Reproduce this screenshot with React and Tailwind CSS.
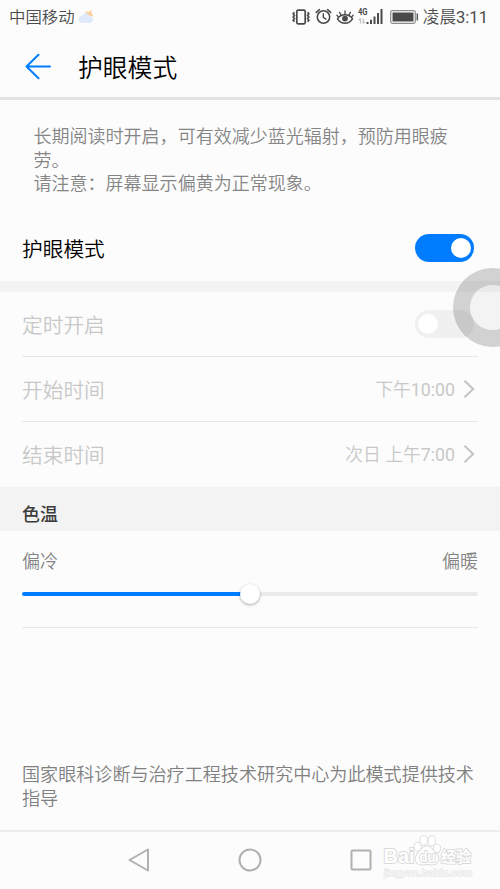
import React, { useState } from 'react';

function VibrateIcon() {
  return (
    <svg width="20" height="16" viewBox="0 0 20 16" fill="none" stroke="#4a4a4a">
      <rect x="5.8" y="1.2" width="8.4" height="13.6" rx="1.2" strokeWidth="1.7" />
      <path d="M3.400 3.200L2.200 4.800l1.200 1.600L2.200 8l1.200 1.600-1.200 1.600 1.200 1.600M16.600 3.200l1.200 1.600-1.200 1.600L17.800 8l-1.200 1.600 1.200 1.600-1.200 1.600" strokeWidth="1.700" />
    </svg>
  );
}

function AlarmIcon() {
  return (
    <svg width="17" height="17" viewBox="0 0 17 17" fill="none" stroke="#4a4a4a" strokeLinecap="round">
      <circle cx="8.5" cy="9" r="6.2" strokeWidth="1.6" />
      <path d="M8.3 5.8V9.4l2.6 1.7" strokeWidth="1.4" />
      <path d="M1.3 4.4L4.4 1.7M15.7 4.4l-3.1-2.7" strokeWidth="1.6" />
    </svg>
  );
}

function EyeIcon() {
  return (
    <svg width="18" height="16" viewBox="0 0 18 16" fill="none" stroke="#4a4a4a" strokeLinecap="round">
      <path d="M1.500 9.800C3.200 7.200 5.700 5.800 9 5.800s5.800 1.400 7.500 4C14.800 12.600 12.300 14.200 9 14.200S3.200 12.600 1.500 9.800z" strokeWidth="1.500" />
      <circle cx="9" cy="9.600" r="2.900" fill="#4a4a4a" stroke="none" />
      <path d="M9 5V2M5 5.800L3.600 3.400M13 5.800l1.400-2.400M2.300 8L.9 6.200M15.700 8l1.400-1.800" strokeWidth="1.300" />
    </svg>
  );
}

function SignalIcon() {
  return (
    <div className="relative h-[17px] w-[26px]">
      <span className="absolute -top-px left-0 origin-left scale-x-[0.8] text-[9.500px] font-bold leading-[10px] text-[#4a4a4a]">4G</span>
      <svg className="absolute inset-0" width="26" height="17" viewBox="0 0 26 17">
        <path d="M2.500 15.500v-5M.9 12.300l1.600-1.800M5.200 10.500v5M6.800 13.700l-1.600 1.800" stroke="#c0c0c0" strokeWidth="1.200" fill="none" />
        <path d="M8.500 14h2v2h-2zM12 11.800h2V16h-2zM15.500 8.500h2V16h-2zM19 5h2v11h-2zM22.500 1h2v15h-2z" fill="#4a4a4a" />
      </svg>
    </div>
  );
}

function BatteryIcon() {
  return (
    <svg width="29" height="14" viewBox="0 0 29 14">
      <rect x=".7" y=".7" width="24.600" height="12.600" rx="1.800" fill="none" stroke="#8a8a8a" strokeWidth="1.200" />
      <rect x="2.500" y="2.500" width="21" height="9" rx=".5" fill="#4a4a4a" />
      <path d="M27.300 3.500v7" stroke="#5a5a5a" strokeWidth="1.500" />
    </svg>
  );
}

function WeatherIcon() {
  return (
    <svg width="17" height="15" viewBox="0 0 17 15">
      <path d="M7.500 2.200l3 .9L13.500.8l-.2 2.900 2.200 3.800-3.500-.6-4-2.500z" fill="#fbcd98" />
      <path d="M4 14a3.700 3.700 0 01-.4-7.300A4.300 4.300 0 0111.500 6.900 3.600 3.600 0 0111.800 14z" fill="#dfe9fa" />
    </svg>
  );
}

function StatusBar() {
  return (
    <div className="flex h-[34px] items-center justify-between pl-[9px] pr-[12px] text-[16.4px] text-[#4c4c4c]">
      <div className="flex items-center">
        <span className="pt-[3px]">中国移动</span>
        <span className="ml-[3px]"><WeatherIcon /></span>
      </div>
      <div className="flex items-center">
        <VibrateIcon />
        <span className="ml-[4px]"><AlarmIcon /></span>
        <span className="ml-[4px]"><EyeIcon /></span>
        <span className="ml-[4px]"><SignalIcon /></span>
        <span className="ml-[6px]"><BatteryIcon /></span>
        <span className="ml-[4px] pt-[3px] text-[16.6px]">凌晨<span className="font-normal">3:11</span></span>
      </div>
    </div>
  );
}

function Header() {
  return (
    <div className="flex h-[66px] items-center border-b-[3px] border-[#e2e2e2] pl-[25px] pt-[2px]">
      <svg width="27" height="27" viewBox="0 0 27 27" fill="none" stroke="#007dff" strokeWidth="2" strokeLinecap="round" strokeLinejoin="round">
        <path d="M25 13.500H1.500M13.500 1.800L1.500 13.500l12 11.700" />
      </svg>
      <h1 className="ml-[26px] pt-[6px] text-[24.8px] leading-none text-black">护眼模式</h1>
    </div>
  );
}

function Toggle({ on, onChange, disabled }) {
  return (
    <button
      onClick={onChange}
      disabled={disabled}
      className={`flex h-7 w-[59px] items-center rounded-full px-[3px] ${on ? 'justify-end bg-[#007dff]' : 'justify-start bg-[#f0f0f0]'}`}
    >
      <span className="size-5 rounded-full bg-white" />
    </button>
  );
}

function Row({ label, value, time, last, children }) {
  return (
    <div className={`mx-[22px] flex h-[65px] items-center justify-between border-b ${last ? 'border-transparent' : 'border-[#e6e6e6]'}`}>
      <span className="pt-[5px] text-[20.7px] text-[#c8c8c8]">{label}</span>
      {time && (
        <span className="flex items-center text-[17.8px] text-[#c8c8c8]">
          <span className="whitespace-pre pt-[3px]">{value}<span className="font-normal">{time}</span></span>
          <svg className="ml-[8px] mr-[3px]" width="12" height="20" viewBox="0 0 12 20" fill="none" stroke="#c4c4c4" strokeWidth="2">
            <path d="M1.500 1.800l8.700 8.200-8.700 8.200" />
          </svg>
        </span>
      )}
      {children}
    </div>
  );
}

function Slider({ value }) {
  return (
    <div className="relative mx-[22px] mt-[9px] flex h-5 items-center">
      <div className="h-[4.5px] w-full overflow-hidden rounded-full bg-[#eaeaea]">
        <div className="h-full bg-[#007dff]" style={{ width: `${value}%` }} />
      </div>
      <div
        className="absolute size-5 -translate-x-1/2 rounded-full bg-white shadow-[0_1px_3px_rgba(0,0,0,0.35)]"
        style={{ left: `${value}%` }}
      />
    </div>
  );
}

function Watermark() {
  return (
    <svg className="absolute left-[382px] top-0" width="98" height="57" viewBox="0 0 98 57" fill="#fff" stroke="#dadada" strokeWidth="1.800" strokeLinejoin="round" paintOrder="stroke" fontFamily="Liberation Sans, Noto Sans CJK SC, sans-serif">
      <text x="1.500" y="31" fontSize="19.500" fontWeight="bold" textLength="31" lengthAdjust="spacingAndGlyphs">Bai</text>
      <ellipse cx="35.700" cy="14.700" rx="3.200" ry="4" />
      <ellipse cx="41.700" cy="8.300" rx="3.300" ry="4.500" />
      <ellipse cx="49.700" cy="8.700" rx="3.300" ry="4.500" />
      <ellipse cx="55" cy="16.300" rx="3.200" ry="4" />
      <path d="M45 14.500c4.500 0 5.500 3.500 8.500 6.500 5 5 3 11.500-3 11.500-2 0-3.500-.5-5.500-.5s-3.500.5-5.500.5c-6 0-8-6.500-3-11.500 3-3 4-6.500 8.500-6.500z" />
      <text x="37.500" y="30" fontSize="14" fontWeight="bold" textLength="16" lengthAdjust="spacingAndGlyphs">du</text>
      <text x="59" y="30" fontSize="15" fontWeight="bold">经验</text>
      <text x="2" y="43.800" fontSize="9.200" textLength="88" lengthAdjust="spacingAndGlyphs" fill="#fafafa" stroke="#e6e6e6" strokeWidth="1.300">jingyan.baidu.com</text>
    </svg>
  );
}

function NavBar() {
  return (
    <div className="relative flex h-[59px] items-center justify-center gap-[87px] border-t-2 border-[#ededed] pb-[2px]">
      <svg width="24" height="24" viewBox="0 0 24 24" fill="none" stroke="#b0b0b0" strokeWidth="2" strokeLinejoin="round">
        <path d="M21 1.500v21L2.500 12z" />
      </svg>
      <svg width="24" height="24" viewBox="0 0 24 24" fill="none" stroke="#b0b0b0" strokeWidth="2">
        <circle cx="12" cy="12" r="10.500" />
      </svg>
      <svg width="24" height="24" viewBox="0 0 24 24" fill="none" stroke="#b0b0b0" strokeWidth="2">
        <rect x="2.500" y="2.500" width="19" height="19" rx="1" />
      </svg>
      <Watermark />
    </div>
  );
}

export default function App() {
  const [enabled, setEnabled] = useState(true);
  return (
    <div className="relative flex h-[889px] w-[500px] flex-col overflow-hidden bg-[#fcfcfc] font-[Roboto,'Noto_Sans_CJK_SC',sans-serif] font-[350]">
      <StatusBar />
      <Header />
      <div className="mt-[25px] pl-[33.5px] text-[18.03px] leading-[23.7px] text-[#858585]">
        <p>长期阅读时开启，可有效减少蓝光辐射，预防用眼疲<br />劳。</p>
        <p>请注意：屏幕显示偏黄为正常现象。</p>
      </div>
      <div className="mt-auto flex h-[66px] items-center justify-between pl-[22px] pr-[26px]">
        <span className="pt-[5px] text-[20.7px] text-black">护眼模式</span>
        <Toggle on={enabled} onChange={() => setEnabled(!enabled)} />
      </div>
      <div className="h-[11px] shrink-0 bg-[#f3f3f3]" />
      <Row label="定时开启">
        <span className="mr-[4px]"><Toggle on={false} disabled /></span>
      </Row>
      <Row label="开始时间" value="下午" time="10:00" />
      <Row label="结束时间" value="次日 上午" time="7:00" last />
      <div className="flex h-11 shrink-0 items-center bg-[#f3f3f3] pl-[22px] pt-[12px] text-[17.9px] font-medium text-[#3c3c3c]">色温</div>
      <div className="mt-[18px] flex justify-between px-[22px] text-[18px] leading-[26px] text-[#858585]">
        <span>偏冷</span>
        <span>偏暖</span>
      </div>
      <Slider value={50} />
      <div className="mx-[22px] mt-[23px] h-px shrink-0 bg-[#e8e8e8]" />
      <p className="mt-[135px] h-[67px] shrink-0 pl-[22px] text-[18.08px] leading-[23.7px] text-[#808080]">
        国家眼科诊断与治疗工程技术研究中心为此模式提供技术<br />指导
      </p>
      <NavBar />
      {/* floating assist button, half off the right edge */}
      <div className="absolute left-[452.5px] top-[268px] size-[79px] rounded-full border-[17px] border-black/[0.165] bg-black/[0.035] bg-clip-padding" />
    </div>
  );
}
